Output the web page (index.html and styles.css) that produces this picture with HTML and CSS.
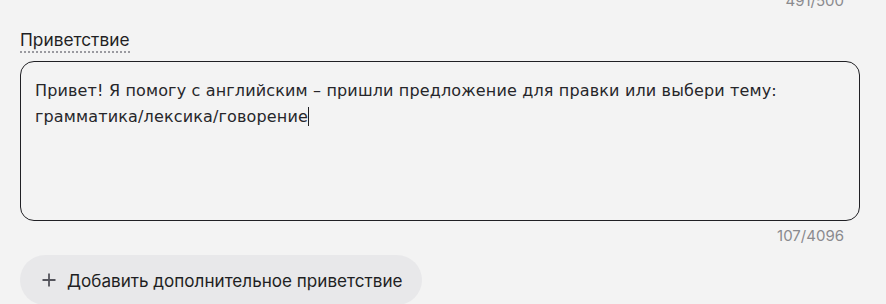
FILE: index.html
```html
<!DOCTYPE html>
<html lang="ru">
<head>
<meta charset="utf-8">
<link rel="stylesheet" href="styles.css">
</head>
<body>
<div class="page">
  <div class="top-counter">491/500</div>
  <div class="field">
    <label class="label">Приветствие</label>
    <div class="textarea">Привет! Я помогу с английским – пришли предложение для правки или выбери тему: грамматика/лексика/говорение<span class="caret"></span></div>
    <div class="counter">107/4096</div>
  </div>
  <button class="add-btn">
    <svg class="plus" width="16" height="16" viewBox="0 0 16 16"><path d="M8 1.5v13M1.5 8h13" stroke="#54545c" stroke-width="1.8" fill="none"/></svg>
    <span>Добавить дополнительное приветствие</span>
  </button>
</div>
</body>
</html>
```
FILE: styles.css
```css
* { box-sizing: border-box; }
html, body { margin: 0; padding: 0; background: #f3f3f3; }
body { width: 886px; height: 304px; overflow: hidden; font-family: "Inter", "Roboto", sans-serif; color: #1f1f23; }
.page { padding: 0 42px 0 20px; margin-top: -8px; }
.top-counter { text-align: right; font-size: 15px; color: #8a8a8e; line-height: 18px; height: 18px; }
.field { margin-top: 20px; }
.label { display: inline-block; font-size: 17.3px; line-height: 20px; color: #1f1f23; border-bottom: 2px dotted #9a9aa0; padding-bottom: 1px; }
.textarea { margin-top: 8px; width: 840px; height: 160px; border: 1px solid #202024; border-radius: 14px; padding: 16px 14px; font-family: "DejaVu Sans", sans-serif; font-size: 16px; letter-spacing: 0.15px; line-height: 26px; color: #26262a; }
.caret { display: inline-block; width: 1px; height: 19px; background: #1f1f23; vertical-align: -4px; }
.counter { text-align: right; font-size: 15px; color: #8a8a8e; line-height: 18px; margin-top: 6px; }
.add-btn { margin-top: 10px; display: flex; align-items: center; gap: 10px; height: 50px; padding: 0 20px 0 21px; border: none; border-radius: 25px; background: #e8e8ea; font-family: "Inter", "Roboto", sans-serif; font-size: 17.1px; color: #1f1f23; }
```
